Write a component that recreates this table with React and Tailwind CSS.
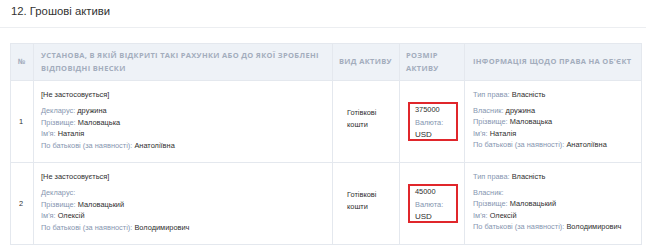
export default function App() {
  const L = "text-[#8696b0]";
  const V = "text-[#2e2e2e]";
  const th =
    "border border-[#e4e8ee] px-[6px] text-left align-middle uppercase font-bold text-[7.5px] leading-[13.5px] tracking-[0.32px] text-[#a3adbd] whitespace-nowrap overflow-hidden";
  const td = "border border-[#e4e8ee]";

  const Row = ({ n, decl, surname, name, patr, owner, amount }) => (
    <tr className="h-[82px]">
      <td className={`${td} text-center align-middle text-[#333] pr-[2px]`}>{n}</td>
      <td className={`${td} align-top pl-[7px] pt-[8px]`}>
        <div className={V}>[Не застосовується]</div>
        <div className="mt-[4.5px]">
          <div>
            <span className={L}>Декларус:</span>
            {decl ? <span className={V}> {decl}</span> : null}
          </div>
          <div>
            <span className={L}>Прізвище:</span>
            <span className={V}> {surname}</span>
          </div>
          <div>
            <span className={L}>Ім'я:</span>
            <span className={V}> {name}</span>
          </div>
          <div>
            <span className={L}>По батькові (за наявності):</span>
            <span className={V}> {patr}</span>
          </div>
        </div>
      </td>
      <td className={`${td} align-middle pl-[14px] text-[#2e2e2e]`}>
        <div className="pb-[6px]">
          Готівкові
          <br />
          кошти
        </div>
      </td>
      <td className={`${td} align-middle pl-[8px]`}>
        <div className="w-[50px] h-[39px] border-2 border-[#e0262b] pl-[5px] leading-[12.5px]">
          <div className={V}>{amount}</div>
          <div className={L}>Валюта:</div>
          <div className={`${V} text-[8px]`}>USD</div>
        </div>
      </td>
      <td className={`${td} align-top pl-[8px] pt-[8px]`}>
        <div>
          <span className={L}>Тип права:</span>
          <span className={V}> Власність</span>
        </div>
        <div className="mt-[4px]">
          <div>
            <span className={L}>Власник:</span>
            {owner ? <span className={V}> {owner}</span> : null}
          </div>
          <div>
            <span className={L}>Прізвище:</span>
            <span className={V}> {surname}</span>
          </div>
          <div>
            <span className={L}>Ім'я:</span>
            <span className={V}> {name}</span>
          </div>
          <div>
            <span className={L}>По батькові (за наявності):</span>
            <span className={V}> {patr}</span>
          </div>
        </div>
      </td>
    </tr>
  );

  return (
    <div
      className="w-[646px] h-[248px] overflow-hidden bg-white"
      style={{ fontFamily: '"Liberation Sans", Arial, sans-serif' }}
    >
      <div className="h-[28px] border-b border-[#eceef1] px-[11px] pt-[3px]">
        <h1 className="text-[11.3px] leading-[16px] text-[#333]">12. Грошові активи</h1>
      </div>
      <div className="pl-[10px] pt-[15px]">
        <table className="w-[631px] table-fixed border-collapse text-[7.4px] leading-[11.5px]">
          <colgroup>
            <col className="w-[23px]" />
            <col className="w-[299px]" />
            <col className="w-[67px]" />
            <col className="w-[65px]" />
            <col className="w-[177px]" />
          </colgroup>
          <thead>
            <tr
              className="h-[37px] bg-[#eef2f7]"
              style={{ fontFamily: '"Open Sans", sans-serif' }}
            >
              <th className={`${th} !text-center !px-0`}>№</th>
              <th className={`${th} !px-[7px]`}>
                Установа, в якій відкриті такі рахунки або до якої зроблені
                <br />
                відповідні внески
              </th>
              <th className={th}>Вид активу</th>
              <th className={th}>
                Розмір
                <br />
                активу
              </th>
              <th className={`${th} !px-[8px]`}>Інформація щодо права на об'єкт</th>
            </tr>
          </thead>
          <tbody>
            <Row
              n="1"
              decl="дружина"
              surname="Маловацька"
              name="Наталія"
              patr="Анатоліївна"
              owner="дружина"
              amount="375000"
            />
            <Row
              n="2"
              decl=""
              surname="Маловацький"
              name="Олексій"
              patr="Володимирович"
              owner=""
              amount="45000"
            />
          </tbody>
        </table>
      </div>
    </div>
  );
}
